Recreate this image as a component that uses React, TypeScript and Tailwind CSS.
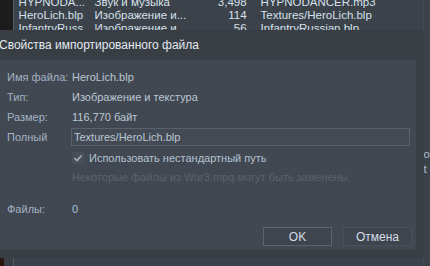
import React from "react";

const font = { fontFamily: '"Liberation Sans", "DejaVu Sans", sans-serif' };

function ListRow({ a, b, c, d }: { a: string; b: string; c: string; d: string }) {
  return (
    <div className="flex h-[13px] items-center whitespace-nowrap text-[11.5px] text-[#d6e0ec]">
      <div className="w-[81px] pl-[5px]">{a}</div>
      <div className="w-[114px]">{b}</div>
      <div className="w-[38px] text-right">{c}</div>
      <div className="pl-[14px]">{d}</div>
    </div>
  );
}

function InfoRow({ label, value }: { label: string; value: string }) {
  return (
    <div className="flex h-[20px] items-center whitespace-nowrap">
      <div className="w-[72px] pl-[7px] text-[#a3b3c5]">{label}</div>
      <div className="text-[#bac7d5]">{value}</div>
    </div>
  );
}

export default function App() {
  return (
    <div className="relative h-[266px] w-[430px] overflow-hidden bg-[#3c4148] text-[11px]" style={font}>
      {/* background list window */}
      <div className="flex h-full">
        <div className="flex w-[14px] flex-col">
          <div className="h-[240px] bg-[#1c1c1d]" />
          <div className="flex flex-1">
            <div className="w-[4px] bg-[#2a1712]" />
            <div className="flex-1 bg-[#3b4047]" />
          </div>
        </div>
        <div className="w-px bg-[#555b63]" />
        <div className="flex flex-1 bg-[#3c4249]">
          <div className="w-[409px] -mt-[4px]">
            <ListRow a="HYPNODA..." b="Звук и музыка" c="3,498" d="HYPNODANCER.mp3" />
            <ListRow a="HeroLich.blp" b="Изображение и..." c="114" d="Textures/HeroLich.blp" />
            <ListRow a="InfantryRuss..." b="Изображение и..." c="56" d="InfantryRussian.blp" />
          </div>
          <div className="flex flex-1 flex-col border-l border-[#464c54] pt-[147px] text-[11.5px] leading-[15px] text-[#a9bfdc]">
            <div>o</div>
            <div>t</div>
          </div>
        </div>
      </div>

      {/* dialog */}
      <div className="absolute left-[-8px] top-[30px] flex h-[228px] w-[432px] flex-col bg-[#393e45]">
        <div className="flex h-[30px] items-center pl-[7px] text-[12px] text-[#e2e8ef]">
          Свойства импортированного файла
        </div>
        <div className="mx-[8px] flex h-[190px] flex-col bg-[#424851] pt-[7px]">
          <InfoRow label="Имя файла:" value="HeroLich.blp" />
          <InfoRow label="Тип:" value="Изображение и текстура" />
          <InfoRow label="Размер:" value="116,770 байт" />
          <div className="mt-[1px] flex h-[18px] items-center">
            <div className="w-[71px] pl-[7px] text-[#a3b3c5]">Полный</div>
            <div className="flex h-[18px] w-[339px] items-center border border-[#5a616b] bg-[#444a53] pl-[2px] text-[#bac7d5]">
              Textures/HeroLich.blp
            </div>
          </div>
          <div className="mt-[2px] flex h-[20px] items-center pl-[72px]">
            <div className="flex h-[12px] w-[12px] items-center justify-center bg-[#4a5058]">
              <svg width="10" height="10" viewBox="0 0 10 10">
                <path d="M1.5 5.2 L4 7.6 L8.5 2.4" fill="none" stroke="#a7afb9" strokeWidth="1.6" />
              </svg>
            </div>
            <div className="pl-[5px] text-[#b4c2d2]">Использовать нестандартный путь</div>
          </div>
          <div className="flex h-[18px] items-center pl-[72px] text-[#5b626c]">
            Некоторые файлы из War3.mpq могут быть заменены.
          </div>
          <div className="mt-[13px] flex h-[20px] items-center">
            <div className="w-[72px] pl-[7px] text-[#a3b3c5]">Файлы:</div>
            <div className="text-[#a9c0dc]">0</div>
          </div>
          <div className="mt-[8px] flex justify-end gap-[11px] pr-[4px]">
            <button className="flex h-[19px] w-[69px] items-center justify-center border border-[#5d646e] bg-[#3f454d] text-[12px] text-[#d2dce8]">
              OK
            </button>
            <button className="flex h-[19px] w-[69px] items-center justify-center border border-[#4a5058] bg-[#3f454d] text-[12px] text-[#d2dce8]">
              Отмена
            </button>
          </div>
        </div>
      </div>
    </div>
  );
}
